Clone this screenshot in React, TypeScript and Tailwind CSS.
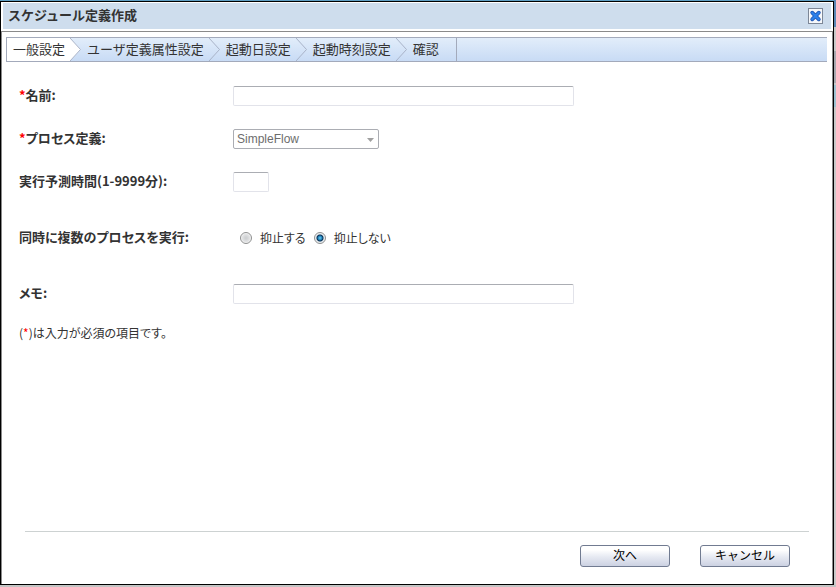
import React from 'react';
import clsx from 'clsx';

const steps = ['一般設定', 'ユーザ定義属性設定', '起動日設定', '起動時刻設定', '確認'];

const labelClass = 'w-[214px] shrink-0 pb-0.5 font-bold';

const inputClass =
  'h-5 rounded-[2px] border border-[#e2e3ea] border-t-[#abadb3] bg-white px-1 text-[13px] outline-none';

const radioClass =
  'h-3 w-3 shrink-0 appearance-none rounded-full border border-[#8e8f8f] bg-[radial-gradient(circle,#cfd1d3_1px,#e4e5e6_4px,#fafafa_5px)] checked:bg-[radial-gradient(circle_at_50%_50%,#6fd0f4_0px,#1c7fb8_2px,#0b2f52_3px,#dfe8ee_4px,#f4f4f4_5px)]';

const buttonClass =
  'h-[22px] w-[90px] rounded-[3px] border border-[#717b91] bg-linear-to-b from-white from-20% via-[#e6e9f2] via-55% to-[#ccd2e2] pb-0.5 text-center text-[12px] leading-[18px] text-black';

function StepArrow({ current }: { current: boolean }) {
  return (
    <svg width="11" height="23" viewBox="0 0 11 23" className="shrink-0" aria-hidden="true">
      {current && <path d="M0 0L11 11.5L0 23Z" fill="#fff" />}
      <path d="M0 0L10.5 11.5L0 23" fill="none" stroke="#a9b3c8" />
    </svg>
  );
}

function StepBar() {
  return (
    <ol className="flex h-[25px] items-center border border-r-0 border-[#a3aabb] bg-linear-to-b from-[#e2edfa] to-[#c8dbf5]">
      {steps.map((step, i) => (
        <li key={step} className={clsx('flex h-full items-center', i === steps.length - 1 && 'border-r border-[#a3aabb] pr-[17px]')}>
          <span className={clsx('flex h-full items-center pb-0.5 pl-1.5', i === 0 && 'bg-white', i < steps.length - 1 && 'pr-[5px]')}>
            {step}
          </span>
          {i < steps.length - 1 && <StepArrow current={i === 0} />}
        </li>
      ))}
    </ol>
  );
}

function Required() {
  return <span className="text-[#f00]">*</span>;
}

export default function App() {
  return (
    <div className="flex min-h-screen bg-[#c4c4c4] pb-0.5 font-['Noto_Sans_CJK_JP',sans-serif] text-[13px] leading-5 text-[#333]">
      <div className="flex flex-1 flex-col border-t border-[#5f9fc4]">
        <div role="dialog" aria-labelledby="dialog-title" className="flex flex-1 flex-col border border-black bg-white">
          <header className="mx-0.5 mt-px mb-0.5 flex h-[26px] items-center justify-between bg-[#cedded] pr-2 pl-[5px]">
            <h1 id="dialog-title" className="pb-0.5 font-bold">スケジュール定義作成</h1>
            <button type="button" aria-label="閉じる" className="flex h-4 w-[15px] items-center justify-center border border-[#7d8797] bg-[#f6f8fb]">
              <svg width="13" height="14" viewBox="0 0 13 14" className="shrink-0" aria-hidden="true">
                <path d="M3.2 3.7L9.8 10.3M9.8 3.7L3.2 10.3" stroke="#2257b4" strokeWidth="3.8" strokeLinecap="round" />
                <path d="M3.2 3.7L9.8 10.3M9.8 3.7L3.2 10.3" stroke="#2c80ea" strokeWidth="2.2" strokeLinecap="round" />
              </svg>
            </button>
          </header>

          <div className="flex flex-1 flex-col border border-b-0 border-[#8a8a8a]">
            <div className="pt-[5px] pr-[5px] pl-1">
              <StepBar />
            </div>

            <form id="schedule" className="px-[17px] pt-3 [font-feature-settings:'palt']">
              <div className="flex h-[43px] items-center">
                <label htmlFor="name" className={labelClass}><Required />名前:</label>
                <input id="name" type="text" className={clsx(inputClass, 'w-[341px]')} />
              </div>
              <div className="flex h-[43px] items-center">
                <label htmlFor="process" className={labelClass}><Required />プロセス定義:</label>
                <div className="relative">
                  <select id="process" disabled className="block h-5 w-[146px] appearance-none rounded-[2px] border border-[#abadb3] bg-white pl-[3px] font-['Liberation_Sans',sans-serif] text-[12px] leading-4 text-[#6d6d6d] opacity-100">
                    <option>SimpleFlow</option>
                  </select>
                  <svg width="7" height="4" viewBox="0 0 7 4" className="pointer-events-none absolute top-[9px] right-[5px]" aria-hidden="true">
                    <path d="M0 0H7L3.5 4Z" fill="#a0a0a0" />
                  </svg>
                </div>
              </div>
              <div className="flex h-[43px] items-center">
                <label htmlFor="minutes" className={labelClass}>実行予測時間(1-9999分):</label>
                <input id="minutes" type="text" className={clsx(inputClass, 'w-9')} />
              </div>
              <div role="radiogroup" aria-labelledby="parallel" className="mt-[7px] flex h-14 items-center">
                <span id="parallel" className={labelClass}>同時に複数のプロセスを実行:</span>
                <div className="flex items-center gap-2 pl-[7px] text-[12px]">
                  <label className="flex items-center gap-2">
                    <input type="radio" name="parallel" className={radioClass} />
                    抑止する
                  </label>
                  <label className="flex items-center gap-2">
                    <input type="radio" name="parallel" defaultChecked className={radioClass} />
                    抑止しない
                  </label>
                </div>
              </div>
              <div className="flex h-14 items-center">
                <label htmlFor="memo" className={labelClass}>メモ:</label>
                <input id="memo" type="text" className={clsx(inputClass, 'w-[341px]')} />
              </div>
              <p className="pt-px text-[12px]">(<Required />)は入力が必須の項目です。</p>
            </form>

            <footer className="mx-[23px] mt-auto flex justify-end gap-[30px] border-t border-[#cdd2d2] pt-[13px] pr-[19px] pb-[17px]">
              <button type="submit" form="schedule" className={buttonClass}>次へ</button>
              <button type="button" className={buttonClass}>キャンセル</button>
            </footer>
          </div>
        </div>
      </div>
      <div className="flex w-0.5 flex-col bg-[#c9c9c9]" aria-hidden="true">
        <span className="h-[27px] bg-[#5b87b5]" />
        <span className="mt-6 h-8 bg-[#a9a9b0]" />
        <span className="mt-0.5 h-[22px] bg-[#9fc3d2]" />
      </div>
    </div>
  );
}
